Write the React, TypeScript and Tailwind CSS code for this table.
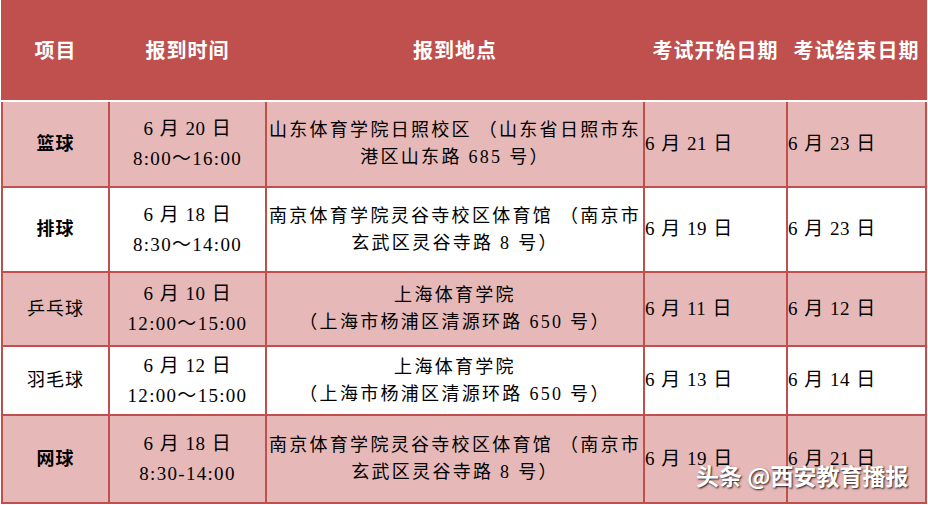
import React from "react";

type Row = {
  name: string;
  bold?: boolean;
  date: string;
  time: string;
  place: string[];
  start: string;
  end: string;
  pink: boolean;
  h: string;
};

const rows: Row[] = [
  {
    name: "篮球",
    bold: true,
    date: "6 月 20 日",
    time: "8:00〜16:00",
    place: ["山东体育学院日照校区 （山东省日照市东", "港区山东路 685 号）"],
    start: "6 月 21 日",
    end: "6 月 23 日",
    pink: true,
    h: "h-[84px]",
  },
  {
    name: "排球",
    bold: true,
    date: "6 月 18 日",
    time: "8:30〜14:00",
    place: ["南京体育学院灵谷寺校区体育馆 （南京市", "玄武区灵谷寺路 8 号）"],
    start: "6 月 19 日",
    end: "6 月 23 日",
    pink: false,
    h: "h-[83px]",
  },
  {
    name: "乒乓球",
    date: "6 月 10 日",
    time: "12:00〜15:00",
    place: ["上海体育学院", "（上海市杨浦区清源环路 650 号）"],
    start: "6 月 11 日",
    end: "6 月 12 日",
    pink: true,
    h: "h-[72px]",
  },
  {
    name: "羽毛球",
    date: "6 月 12 日",
    time: "12:00〜15:00",
    place: ["上海体育学院", "（上海市杨浦区清源环路 650 号）"],
    start: "6 月 13 日",
    end: "6 月 14 日",
    pink: false,
    h: "h-[67px]",
  },
  {
    name: "网球",
    bold: true,
    date: "6 月 18 日",
    time: "8:30-14:00",
    place: ["南京体育学院灵谷寺校区体育馆 （南京市", "玄武区灵谷寺路 8 号）"],
    start: "6 月 19 日",
    end: "6 月 21 日",
    pink: true,
    h: "h-[86px]",
  },
];

const headers = ["项目", "报到时间", "报到地点", "考试开始日期", "考试结束日期"];

const cols = "grid grid-cols-[105px_155px_376px_141px_137px] gap-x-[2px]";

export default function App() {
  return (
    <div className="relative w-[928px] h-[505px] bg-white overflow-hidden font-['Liberation_Serif','Noto_Sans_CJK_SC',serif] text-black">
      <div className="ml-[1px] w-[926px]">
        {/* header */}
        <div className={cn(cols, "h-[100px] bg-[#c0504d] px-[2px] items-center")}>
          {headers.map((t) => (
            <div
              key={t}
              className="text-center text-white font-bold text-[20px] tracking-[1px] font-['Noto_Sans_CJK_SC',sans-serif]"
            >
              {t}
            </div>
          ))}
        </div>
        <div className="h-[2px] bg-white" />

        {/* body */}
        <div className="flex flex-col gap-y-[2px] bg-[#c0504d] p-[2px] pt-0">
          {rows.map((r) => (
            <div key={r.name} className={cn(cols, r.h)}>
              <Cell pink={r.pink} className="justify-center">
                <span className={cn("text-[18px] tracking-[1px]", r.bold && "font-bold")}>{r.name}</span>
              </Cell>
              <Cell pink={r.pink} className="justify-center">
                <div className="text-center text-[19px] leading-[30px] whitespace-nowrap">
                  <div className="tracking-[0.5px] [word-spacing:1px]">{r.date}</div>
                  <div className="tracking-[1.3px]">{r.time}</div>
                </div>
              </Cell>
              <Cell pink={r.pink} className="justify-center">
                <div className="text-center text-[18px] tracking-[2.3px] leading-[27px] whitespace-nowrap">
                  {r.place.map((l) => (
                    <div key={l}>{l}</div>
                  ))}
                </div>
              </Cell>
              <Cell pink={r.pink}>
                <span className="text-[19px] tracking-[0.5px] [word-spacing:1px] whitespace-nowrap">{r.start}</span>
              </Cell>
              <Cell pink={r.pink}>
                <span className="text-[19px] tracking-[0.5px] [word-spacing:1px] whitespace-nowrap">{r.end}</span>
              </Cell>
            </div>
          ))}
        </div>
      </div>

      {/* watermark */}
      <div className="absolute left-[696px] top-[460px] text-white font-bold text-[23px] leading-[30px] whitespace-nowrap font-['Noto_Sans_CJK_SC',sans-serif] [text-shadow:1px_1px_2px_rgba(0,0,0,0.85)]">
        头条 @西安教育播报
      </div>
    </div>
  );
}

function Cell({
  pink,
  className,
  children,
}: {
  pink: boolean;
  className?: string;
  children: React.ReactNode;
}) {
  return (
    <div className={cn("flex items-center", pink ? "bg-[#e6b9b8]" : "bg-white", className)}>
      {children}
    </div>
  );
}

function cn(...classes: (string | undefined | null | boolean)[]): string {
  return classes.filter(Boolean).join(" ");
}
